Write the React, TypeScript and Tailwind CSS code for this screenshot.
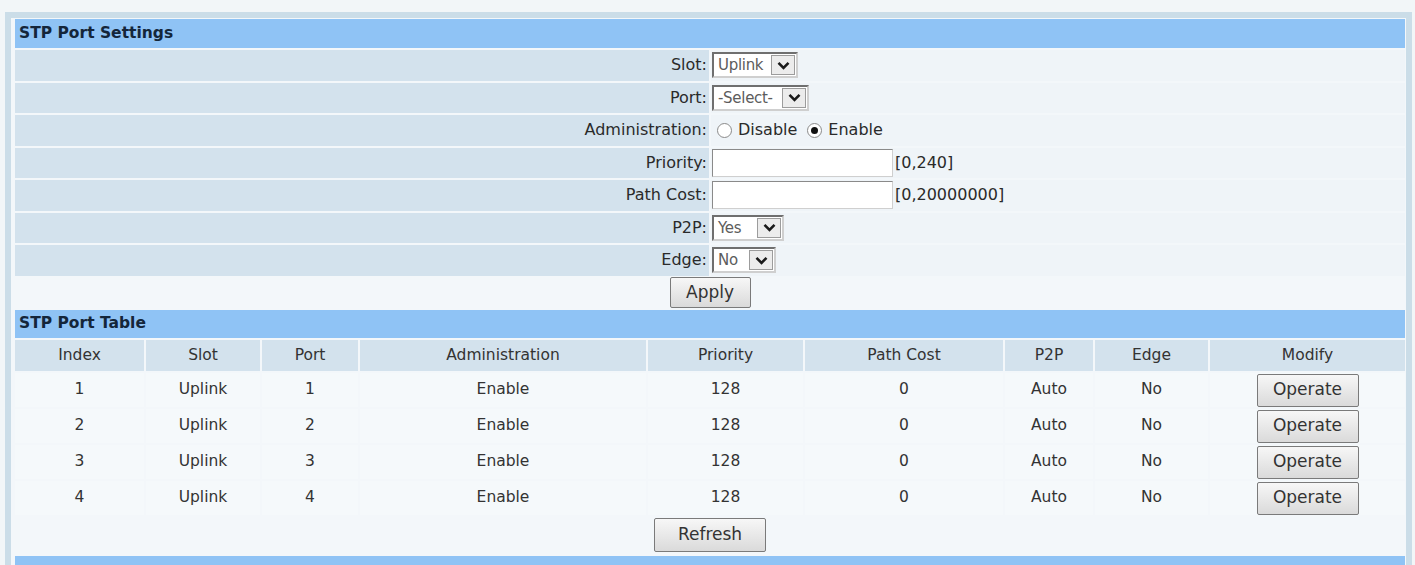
const FONT = { fontFamily: '"DejaVu Sans", Verdana, sans-serif' };

const ROWS = [
  { index: 1, slot: "Uplink", port: 1, admin: "Enable", priority: 128, cost: 0, p2p: "Auto", edge: "No" },
  { index: 2, slot: "Uplink", port: 2, admin: "Enable", priority: 128, cost: 0, p2p: "Auto", edge: "No" },
  { index: 3, slot: "Uplink", port: 3, admin: "Enable", priority: 128, cost: 0, p2p: "Auto", edge: "No" },
  { index: 4, slot: "Uplink", port: 4, admin: "Enable", priority: 128, cost: 0, p2p: "Auto", edge: "No" },
];

const COLS = ["Index", "Slot", "Port", "Administration", "Priority", "Path Cost", "P2P", "Edge", "Modify"];

function Chevron() {
  return (
    <svg width="13" height="9" viewBox="0 0 13 9">
      <path d="M1.5 1.8 L6.5 6.8 L11.5 1.8" fill="none" stroke="#1a1a1a" strokeWidth="2.6" />
    </svg>
  );
}

function FakeSelect({ value, width }: { value: string; width: string }) {
  return (
    <div className={`flex h-[26px] ${width} items-stretch border-2 border-[#6f6f6f] border-b-[#cfcfcf] border-r-[#cfcfcf] bg-white`}>
      <span className="flex min-w-0 flex-1 items-center overflow-hidden whitespace-nowrap pl-[4px] text-[15px] tracking-[-0.3px] text-[#5c5c5c]">
        {value}
      </span>
      <span className="my-[1px] mr-[1px] flex w-[24px] shrink-0 items-center justify-center border border-[#9c9c9c] bg-[#ececec]">
        <Chevron />
      </span>
    </div>
  );
}

function Radio({ checked }: { checked?: boolean }) {
  return (
    <span className="flex h-[15px] w-[15px] items-center justify-center rounded-full border border-[#8a8a8a] bg-white">
      {checked && <span className="h-[7px] w-[7px] rounded-full bg-[#111]" />}
    </span>
  );
}

function TextBox() {
  return <div className="h-[28px] w-[181px] border border-[#8a8a8a] border-b-[#cfcfcf] border-r-[#cfcfcf] bg-white" />;
}

function Btn({ label, size }: { label: string; size: string }) {
  return (
    <button
      className={`${size} rounded-[2px] border border-[#7a7a7a] bg-gradient-to-b from-[#f7f7f7] to-[#dadada] text-[17px] text-[#333]`}
      style={FONT}
    >
      {label}
    </button>
  );
}

function FormRow({ label, children }: { label: string; children: React.ReactNode }) {
  return (
    <div className="grid h-[30.5px] grid-cols-2 gap-x-[2px]">
      <div className="flex items-center justify-end bg-[#d3e2ed] pr-[2px] text-[16px] text-[#2a2a2a]">{label}</div>
      <div className="flex items-center gap-[2px] bg-[#eff4f8] pl-[1px] text-[16px] text-[#2a2a2a]">{children}</div>
    </div>
  );
}

export default function App() {
  return (
    <div className="h-[565px] overflow-hidden bg-[#f2f6f8] pt-[12px]" style={FONT}>
      <div className="ml-[5px] mr-[3px] border-[6px] border-b-0 border-[#cbdde8] bg-[#f3f7fa] pl-[4px] pr-[1px] pt-[1px]">
        {/* Settings */}
        <div className="flex h-[29px] items-center bg-[#8fc3f5] pl-[4px] text-[15.5px] font-bold text-[#14263a]">
          STP Port Settings
        </div>
        <div className="mt-[2px] flex flex-col gap-[2px]">
          <FormRow label="Slot:">
            <FakeSelect value="Uplink" width="w-[86px]" />
          </FormRow>
          <FormRow label="Port:">
            <FakeSelect value="-Select-" width="w-[97px]" />
          </FormRow>
          <FormRow label="Administration:">
            <span className="ml-[5px] flex items-center gap-[6px]">
              <Radio />
              <span>Disable</span>
            </span>
            <span className="ml-[8px] flex items-center gap-[6px]">
              <Radio checked />
              <span>Enable</span>
            </span>
          </FormRow>
          <FormRow label="Priority:">
            <TextBox />
            <span>[0,240]</span>
          </FormRow>
          <FormRow label="Path Cost:">
            <TextBox />
            <span>[0,20000000]</span>
          </FormRow>
          <FormRow label="P2P:">
            <FakeSelect value="Yes" width="w-[72px]" />
          </FormRow>
          <FormRow label="Edge:">
            <FakeSelect value="No" width="w-[64px]" />
          </FormRow>
          <div className="flex h-[30.5px] items-center justify-center">
            <Btn label="Apply" size="h-[31px] w-[81px]" />
          </div>
        </div>

        {/* Table */}
        <div className="mt-[2px] flex h-[28px] items-center bg-[#8fc3f5] pl-[4px] text-[15.5px] font-bold text-[#14263a]">
          STP Port Table
        </div>
        <div className="mt-[2px] flex flex-col gap-[2px] text-[15.5px] text-[#333]">
          <div className="grid h-[31px] grid-cols-[129px_114px_96px_286px_155px_198px_88px_113px_1fr] gap-x-[2px]">
            {COLS.map((c) => (
              <div key={c} className="flex items-center justify-center bg-[#d3e2ed]">
                {c}
              </div>
            ))}
          </div>
          {ROWS.map((r) => (
            <div
              key={r.index}
              className="grid h-[34px] grid-cols-[129px_114px_96px_286px_155px_198px_88px_113px_1fr] gap-x-[2px]"
            >
              <div className="flex items-center justify-center bg-[#f5f9fb]">{r.index}</div>
              <div className="flex items-center justify-center bg-[#f5f9fb]">{r.slot}</div>
              <div className="flex items-center justify-center bg-[#f5f9fb]">{r.port}</div>
              <div className="flex items-center justify-center bg-[#f5f9fb]">{r.admin}</div>
              <div className="flex items-center justify-center bg-[#f5f9fb]">{r.priority}</div>
              <div className="flex items-center justify-center bg-[#f5f9fb]">{r.cost}</div>
              <div className="flex items-center justify-center bg-[#f5f9fb]">{r.p2p}</div>
              <div className="flex items-center justify-center bg-[#f5f9fb]">{r.edge}</div>
              <div className="flex items-center justify-center bg-[#f5f9fb]">
                <Btn label="Operate" size="h-[33px] w-[102px]" />
              </div>
            </div>
          ))}
          <div className="flex h-[36px] items-center justify-center">
            <Btn label="Refresh" size="h-[34px] w-[112px]" />
          </div>
        </div>
        <div className="mt-[3px] h-[20px] bg-[#8fc3f5]" />
      </div>
    </div>
  );
}
